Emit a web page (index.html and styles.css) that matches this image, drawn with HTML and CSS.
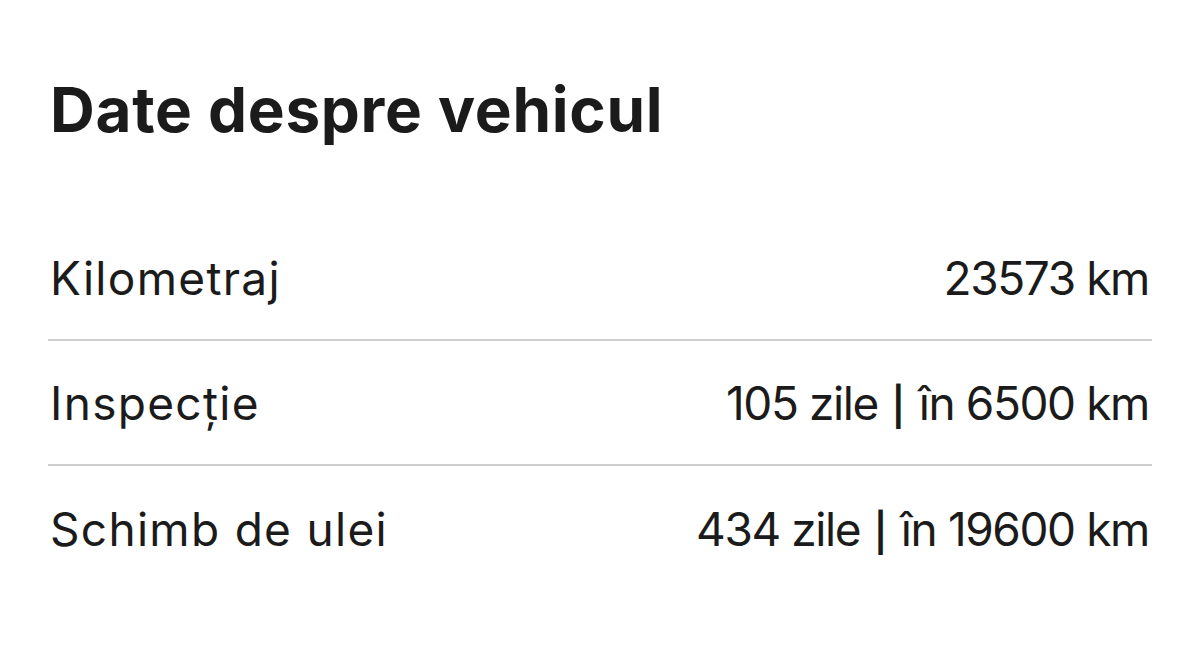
FILE: index.html
```html
<!DOCTYPE html>
<html lang="ro">
<head>
<meta charset="utf-8">
<link rel="stylesheet" href="styles.css">
</head>
<body>
<main class="panel">
  <h1 class="title">Date despre vehicul</h1>
  <div class="list">
    <div class="row">
      <span class="label">Kilometraj</span>
      <span class="value">23573 km</span>
    </div>
    <div class="row">
      <span class="label">Inspecție</span>
      <span class="value">105 zile <span class="sep">|</span> în 6500 km</span>
    </div>
    <div class="row last">
      <span class="label">Schimb de ulei</span>
      <span class="value">434 zile <span class="sep">|</span> în 19600 km</span>
    </div>
  </div>
</main>
</body>
</html>
```

FILE: styles.css
```css
html, body {
  margin: 0;
  padding: 0;
  background: #ffffff;
}
body {
  font-family: "Inter", "Lato", "Liberation Sans", sans-serif;
  color: #1b1b1b;
  width: 1200px;
  height: 669px;
  overflow: hidden;
}
.panel {
  padding: 0 48px 0 48px;
}
.title {
  margin: 0;
  padding-top: 73px;
  height: 216px;
  box-sizing: border-box;
  font-size: 62px;
  font-weight: 700;
  line-height: 74px;
  letter-spacing: 0.7px;
  padding-left: 2px;
}
.list {
  display: flex;
  flex-direction: column;
}
.row {
  display: flex;
  justify-content: space-between;
  align-items: center;
  height: 125px;
  box-sizing: border-box;
  border-bottom: 2px solid #cfcfcf;
  font-size: 46px;
  padding: 0 3px 0 2px;
}
.row.last {
  border-bottom: none;
}
.label {
  letter-spacing: 1.3px;
}
.value {
  letter-spacing: -1.4px;
}
.sep {
  font-size: 38px;
  font-weight: 600;
  letter-spacing: 0;
  margin: 0 2px;
}
```
